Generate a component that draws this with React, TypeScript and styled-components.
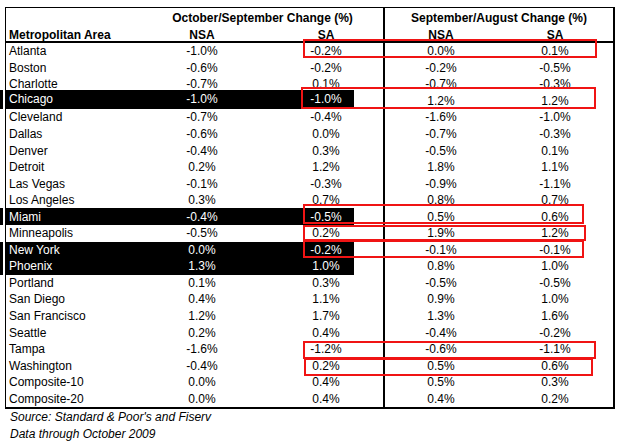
import React from 'react'
import styled, { createGlobalStyle } from 'styled-components'

const GlobalStyle = createGlobalStyle`
  html, body {
    margin: 0;
    padding: 0;
    background: #fff;
  }
  body {
    font-family: "Liberation Sans", Arial, sans-serif;
    font-size: 12px;
    color: #000;
  }
`

// name | NSA | SA | gap | NSA | SA
const COLUMNS = '100px 192px 56px 29px 114px 116px'

const Page = styled.div`
  width: 630px;
  height: 445px;
  box-sizing: border-box;
  padding: 7px 0 0 5px;
`

const Sheet = styled.div`
  position: relative;
  box-sizing: border-box;
  width: 610px;
  border-top: 1px solid #000;
  border-left: 1px solid #000;
  border-right: 2px solid #000;
  border-bottom: 2px solid #000;
`

const Head = styled.div`
  border-bottom: 2px solid #000;
`

const Row = styled.div`
  display: grid;
  grid-template-columns: ${COLUMNS};
`

const HeadRow = styled(Row)`
  height: 16.5px;
`

const Body = styled.div`
  display: grid;
  grid-template-rows: repeat(22, 1fr);
  height: 364px;
`

const Cell = styled.div<{ $dark?: boolean; $rule?: boolean; $left?: boolean; $span?: number; $lift?: number }>`
  display: flex;
  align-items: center;
  justify-content: ${p => (p.$left ? 'flex-start' : 'center')};
  padding-left: ${p => (p.$left ? '3px' : '0')};
  margin-top: ${p => -(p.$lift ?? 0)}px;
  box-sizing: border-box;
  white-space: nowrap;
  background: ${p => (p.$dark ? '#000' : 'transparent')};
  color: ${p => (p.$dark ? '#fff' : '#000')};
  border-left: ${p => (p.$rule ? '2px solid #000' : 'none')};
  grid-column: span ${p => p.$span ?? 1};
`

const NameCell = styled(Cell)`
  position: relative;
  &::before {
    content: '';
    display: ${p => (p.$dark ? 'block' : 'none')};
    position: absolute;
    left: -6px;
    top: 0;
    bottom: 0;
    width: 3px;
    background: #000;
  }
`

const HeadCell = styled(Cell)<{ $shift?: number }>`
  font-weight: bold;
  padding-top: 3px;
  padding-left: ${p => p.$shift ?? (p.$left ? 3 : 0)}px;
`

const Mark = styled.div<{ $x: number; $y: number; $w: number; $h: number }>`
  position: absolute;
  left: ${p => p.$x}px;
  top: ${p => p.$y}px;
  width: ${p => p.$w}px;
  height: ${p => p.$h}px;
  box-sizing: border-box;
  border: 2px solid #f01414;
  pointer-events: none;
`

const Notes = styled.div`
  padding-left: 5px;
  font-style: italic;
  line-height: 16.5px;
`

type Metro = {
    name: string
    values: [string, string, string, string]
    dark?: boolean
    lift?: number
}

const rows: Metro[] = [
    { name: 'Atlanta', values: ['-1.0%', '-0.2%', '0.0%', '0.1%'] },
    { name: 'Boston', values: ['-0.6%', '-0.2%', '-0.2%', '-0.5%'] },
    { name: 'Charlotte', values: ['-0.7%', '0.1%', '-0.7%', '-0.3%'] },
    { name: 'Chicago', values: ['-1.0%', '-1.0%', '1.2%', '1.2%'], dark: true, lift: 3 },
    { name: 'Cleveland', values: ['-0.7%', '-0.4%', '-1.6%', '-1.0%'] },
    { name: 'Dallas', values: ['-0.6%', '0.0%', '-0.7%', '-0.3%'] },
    { name: 'Denver', values: ['-0.4%', '0.3%', '-0.5%', '0.1%'] },
    { name: 'Detroit', values: ['0.2%', '1.2%', '1.8%', '1.1%'] },
    { name: 'Las Vegas', values: ['-0.1%', '-0.3%', '-0.9%', '-1.1%'] },
    { name: 'Los Angeles', values: ['0.3%', '0.7%', '0.8%', '0.7%'] },
    { name: 'Miami', values: ['-0.4%', '-0.5%', '0.5%', '0.6%'], dark: true },
    { name: 'Minneapolis', values: ['-0.5%', '0.2%', '1.9%', '1.2%'] },
    { name: 'New York', values: ['0.0%', '-0.2%', '-0.1%', '-0.1%'], dark: true },
    { name: 'Phoenix', values: ['1.3%', '1.0%', '0.8%', '1.0%'], dark: true },
    { name: 'Portland', values: ['0.1%', '0.3%', '-0.5%', '-0.5%'] },
    { name: 'San Diego', values: ['0.4%', '1.1%', '0.9%', '1.0%'] },
    { name: 'San Francisco', values: ['1.2%', '1.7%', '1.3%', '1.6%'] },
    { name: 'Seattle', values: ['0.2%', '0.4%', '-0.4%', '-0.2%'] },
    { name: 'Tampa', values: ['-1.6%', '-1.2%', '-0.6%', '-1.1%'] },
    { name: 'Washington', values: ['-0.4%', '0.2%', '0.5%', '0.6%'] },
    { name: 'Composite-10', values: ['0.0%', '0.4%', '0.5%', '0.3%'] },
    { name: 'Composite-20', values: ['0.0%', '0.4%', '0.4%', '0.2%'] },
]

// red call-outs, measured from the inside top-left corner of the sheet
const marks = [
    { x: 297, y: 31, w: 294, h: 19 },
    { x: 295, y: 79, w: 295, h: 22 },
    { x: 297, y: 196, w: 281, h: 20 },
    { x: 297, y: 216.5, w: 283, h: 16.5 },
    { x: 297, y: 232, w: 281, h: 18 },
    { x: 297, y: 333, w: 293, h: 17.5 },
    { x: 298, y: 349.5, w: 289, h: 18 },
]

function App() {
    return (
        <Page>
            <GlobalStyle />
            <Sheet>
                <Head>
                    <HeadRow>
                        <HeadCell $left />
                        <HeadCell $span={3} $shift={36}>October/September Change (%)</HeadCell>
                        <HeadCell $span={2} $rule>September/August Change (%)</HeadCell>
                    </HeadRow>
                    <HeadRow>
                        <HeadCell $left>Metropolitan Area</HeadCell>
                        <HeadCell>NSA</HeadCell>
                        <HeadCell>SA</HeadCell>
                        <HeadCell />
                        <HeadCell $rule>NSA</HeadCell>
                        <HeadCell>SA</HeadCell>
                    </HeadRow>
                </Head>
                <Body>
                    {rows.map(({ name, values, dark, lift }) => (
                        <Row key={name}>
                            <NameCell $left $dark={dark} $lift={lift}>{name}</NameCell>
                            <Cell $dark={dark} $lift={lift}>{values[0]}</Cell>
                            <Cell $dark={dark} $lift={lift}>{values[1]}</Cell>
                            <Cell />
                            <Cell $rule>{values[2]}</Cell>
                            <Cell>{values[3]}</Cell>
                        </Row>
                    ))}
                </Body>
                {marks.map(m => (
                    <Mark key={m.y} $x={m.x} $y={m.y} $w={m.w} $h={m.h} />
                ))}
            </Sheet>
            <Notes>
                <div>Source: Standard &amp; Poor's and Fiserv</div>
                <div>Data through October 2009</div>
            </Notes>
        </Page>
    )
}

export default App
